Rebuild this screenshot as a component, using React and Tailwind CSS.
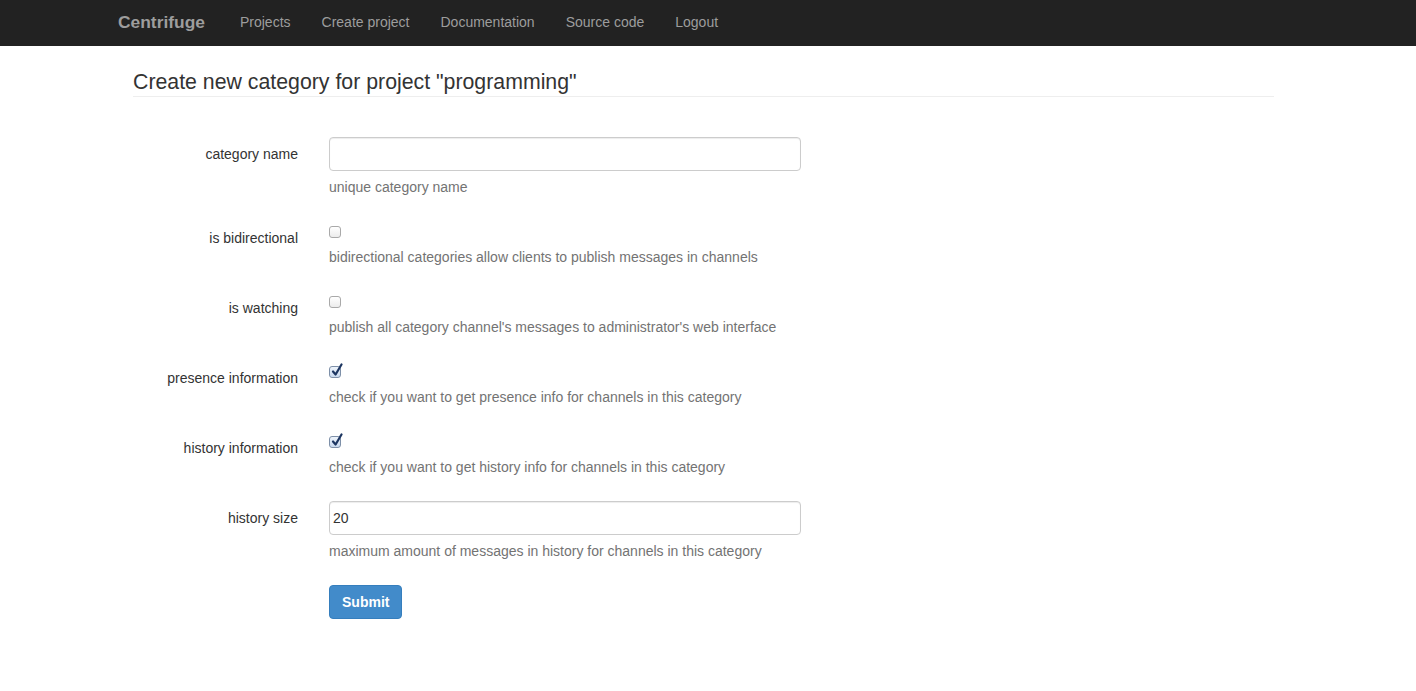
import React from "react";

const navLinks = ["Projects", "Create project", "Documentation", "Source code", "Logout"];

const Checkbox = ({ checked }) => (
  <span
    className={
      "relative block w-[12px] h-[12px] rounded-[3px] border " +
      (checked
        ? "border-[#7d8fa8] bg-gradient-to-b from-[#eef4fb] to-[#c9d9ee]"
        : "border-[#a9a9a9] bg-gradient-to-b from-white to-[#ececec]")
    }
  >
    {checked && (
      <svg
        className="absolute left-[1px] top-[-4px]"
        width="12"
        height="14"
        viewBox="0 0 12 14"
      >
        <path
          d="M2 8.5 L4.6 11.5 L10.5 1.5"
          fill="none"
          stroke="#1c3561"
          strokeWidth="2.2"
          strokeLinecap="round"
          strokeLinejoin="round"
        />
      </svg>
    )}
  </span>
);

const FormRow = ({ label, help, children }) => (
  <div className="flex">
    <label className="w-[165px] shrink-0 pt-[7px] text-right leading-[20px] text-[#333]">
      {label}
    </label>
    <div className="ml-[31px]">
      {children}
      <p className="mt-[6px] leading-[20px] text-[#737373]">{help}</p>
    </div>
  </div>
);

const TextInput = ({ value }) => (
  <input
    type="text"
    defaultValue={value}
    className="block h-[34px] w-[472px] rounded-[4px] border border-[#ccc] bg-white pl-[3px] text-[14px] text-[#333] shadow-[inset_0_1px_1px_rgba(0,0,0,0.075)] outline-none"
  />
);

const CheckField = ({ checked }) => (
  <div className="h-[20px] pt-[5px]">
    <Checkbox checked={checked} />
  </div>
);

export default function App() {
  return (
    <div
      className="min-h-screen bg-white text-[14px] text-[#333]"
      style={{ fontFamily: '"Liberation Sans", Arial, Helvetica, sans-serif' }}
    >
      <nav className="flex h-[46px] items-center bg-[#222] pb-[2px] pl-[118px]">
        <span className="text-[17.4px] font-bold text-[#9d9d9d]">Centrifuge</span>
        <ul className="ml-[35px] flex gap-[31px]">
          {navLinks.map((link) => (
            <li key={link}>
              <a className="text-[14px] text-[#9d9d9d]" href="#">
                {link}
              </a>
            </li>
          ))}
        </ul>
      </nav>

      <main className="ml-[133px] w-[1141px]">
        <h3 className="mt-[25px] border-b border-[#eee] pb-[2px] text-[21.3px] leading-[23px] text-[#333]">
          Create new category for project "programming"
        </h3>

        <form className="mt-[40px] flex flex-col gap-[24px]">
          <FormRow label="category name" help="unique category name">
            <TextInput value="" />
          </FormRow>
          <FormRow
            label="is bidirectional"
            help="bidirectional categories allow clients to publish messages in channels"
          >
            <CheckField checked={false} />
          </FormRow>
          <FormRow
            label="is watching"
            help="publish all category channel's messages to administrator's web interface"
          >
            <CheckField checked={false} />
          </FormRow>
          <FormRow
            label="presence information"
            help="check if you want to get presence info for channels in this category"
          >
            <CheckField checked={true} />
          </FormRow>
          <FormRow
            label="history information"
            help="check if you want to get history info for channels in this category"
          >
            <CheckField checked={true} />
          </FormRow>
          <FormRow
            label="history size"
            help="maximum amount of messages in history for channels in this category"
          >
            <TextInput value="20" />
          </FormRow>
          <div className="flex">
            <div className="w-[165px] shrink-0" />
            <div className="ml-[31px]">
              <button
                type="button"
                className="h-[34px] rounded-[4px] border border-[#357ebd] bg-[#428bca] px-[12px] text-[14px] font-bold text-white"
              >
                Submit
              </button>
            </div>
          </div>
        </form>
      </main>
    </div>
  );
}
